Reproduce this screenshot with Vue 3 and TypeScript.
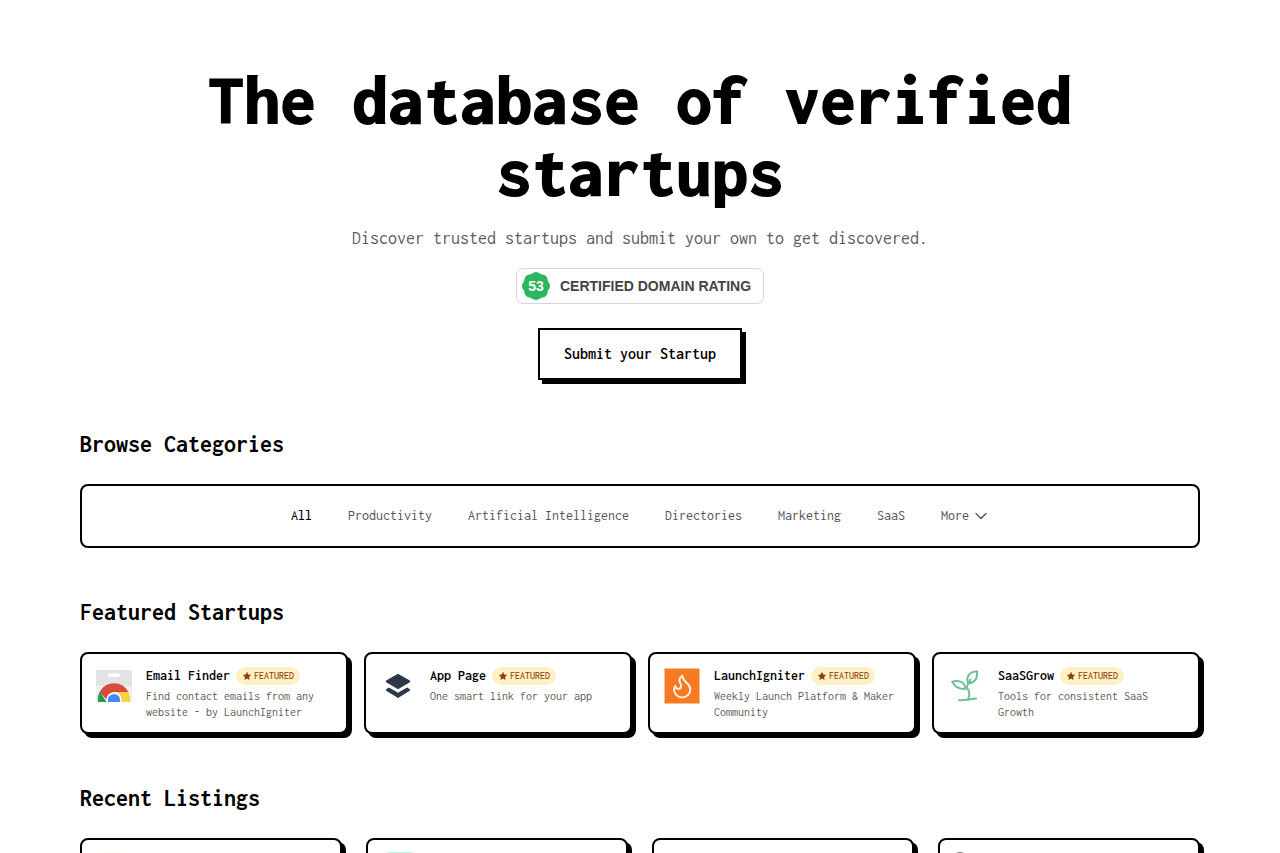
<script setup lang="ts">
type Icon = 'store' | 'layers' | 'flame' | 'sprout'

interface Startup {
  name: string
  description: string
  icon: Icon
}

const categories: string[] = [
  'All',
  'Productivity',
  'Artificial Intelligence',
  'Directories',
  'Marketing',
  'SaaS',
]

const featured: Startup[] = [
  { name: 'Email Finder', description: 'Find contact emails from any website - by LaunchIgniter', icon: 'store' },
  { name: 'App Page', description: 'One smart link for your app', icon: 'layers' },
  { name: 'LaunchIgniter', description: 'Weekly Launch Platform & Maker Community', icon: 'flame' },
  { name: 'SaaSGrow', description: 'Tools for consistent SaaS Growth', icon: 'sprout' },
]

const recent: string[] = ['sun', 'mint', 'plain', 'ring']
</script>

<template>
  <main class="page">
    <header class="hero">
      <h1>The database of verified startups</h1>
      <p class="lead">Discover trusted startups and submit your own to get discovered.</p>
      <a class="rating" href="#rating">
        <svg class="seal" viewBox="0 0 28 28" aria-hidden="true">
          <g fill="#2db662">
            <circle cx="14" cy="14" r="12.4" />
            <circle cx="14" cy="6" r="6" />
            <circle cx="19.7" cy="8.3" r="6" />
            <circle cx="22" cy="14" r="6" />
            <circle cx="19.7" cy="19.7" r="6" />
            <circle cx="14" cy="22" r="6" />
            <circle cx="8.3" cy="19.7" r="6" />
            <circle cx="6" cy="14" r="6" />
            <circle cx="8.3" cy="8.3" r="6" />
          </g>
          <text x="14" y="19" text-anchor="middle" fill="#fff">53</text>
        </svg>
        <span>CERTIFIED DOMAIN RATING</span>
      </a>
      <button class="submit" type="button">Submit your Startup</button>
    </header>

    <section>
      <h2>Browse Categories</h2>
      <nav class="categories" aria-label="Categories">
        <a
          v-for="(category, i) in categories"
          :key="category"
          href="#categories"
          :class="{ active: i === 0 }"
        >{{ category }}</a>
        <button type="button" class="more">
          More
          <svg viewBox="0 0 16 16" aria-hidden="true">
            <path d="M3 5.5 8 10.5 13 5.5" fill="none" stroke="currentColor" stroke-width="1.4" stroke-linecap="round" stroke-linejoin="round" />
          </svg>
        </button>
      </nav>
    </section>

    <section>
      <h2>Featured Startups</h2>
      <div class="grid">
        <a v-for="item in featured" :key="item.name" class="card" href="#startup">
          <svg v-if="item.icon === 'store'" class="icon" viewBox="0 0 40 40" aria-hidden="true">
            <path d="M2 4h36v16H2z" fill="#e3e3e3" />
            <path d="M2 20h36v16H2z" fill="#efefef" />
            <rect x="14" y="7.5" width="12" height="3.4" rx="1.7" fill="#fff" />
            <path d="M5.6 26A16.2 16.2 0 0 1 34.4 26H20L12 33z" fill="#db4a3f" />
            <path d="M4 36A16.2 16.2 0 0 1 5.8 25.8L12.5 36z" fill="#239a56" />
            <path d="M20 26h14.4A16.2 16.2 0 0 1 36 36H20z" fill="#fdd043" />
            <path d="M12.7 36A7.6 7.6 0 1 1 27.3 36z" fill="#fff" />
            <path d="M14.1 36A6.2 6.2 0 1 1 25.9 36z" fill="#4587f3" />
          </svg>
          <svg v-else-if="item.icon === 'layers'" class="icon" viewBox="0 0 40 40" aria-hidden="true">
            <path d="M20 7.8 31.8 14.6Q32.6 15.4 31.8 16.2L20 23.2 8.2 16.2Q7.4 15.4 8.2 14.6z" fill="#2c3848" />
            <path d="M11 21.6 20 26.8 29 21.6 31.8 23.2Q32.6 24 31.8 24.8L20 32 8.2 24.8Q7.4 24 8.2 23.2z" fill="#2c3848" />
          </svg>
          <svg v-else-if="item.icon === 'flame'" class="icon" viewBox="0 0 40 40" aria-hidden="true">
            <path d="M2.5 2.5h35v35h-35z" fill="#f67a24" />
            <path d="M16.2 22.8A2.9 2.9 0 0 0 19.1 19.9C19.1 18.3 18.5 17.6 17.9 16.4 16.7 13.9 17.7 11.8 20.2 9.6 20.8 12.5 22.5 15.3 24.8 17.1 27.1 19 28.3 21.1 28.3 23.4A8.1 8.1 0 0 1 12.1 23.4C12.1 22 12.6 20.7 13.3 19.9A2.9 2.9 0 0 0 16.2 22.8z" fill="none" stroke="#fff1e2" stroke-width="2" stroke-linejoin="round" />
          </svg>
          <svg v-else class="icon" viewBox="0 0 40 40" aria-hidden="true">
            <g fill="none" stroke="#6ec09a" stroke-width="2" stroke-linecap="round" stroke-linejoin="round">
              <path d="M13 34.2C18 34.3 25 33 30 32.5" />
              <path d="M22 33.2C24.6 28 22.8 24 20.6 21.5 21 19 22 17 24.5 13.6" />
              <path d="M19.3 22.8C12.5 23.4 8.3 20.4 6.2 15.7 12.5 13.7 19 15.8 19.3 22.8z" />
              <path d="M22.2 17.6C19.4 10.6 23.8 5.6 31 5.2 31.8 12.2 29 16.8 22.2 17.6z" />
            </g>
          </svg>
          <div class="body">
            <div class="title">
              <h3>{{ item.name }}</h3>
              <span class="tag">
                <svg viewBox="0 0 10 10" aria-hidden="true">
                  <path d="M5 .8 6.3 3.5 9.2 3.9 7.1 5.9 7.6 8.9 5 7.5 2.4 8.9 2.9 5.9 .8 3.9 3.7 3.5z" fill="#8f400e" />
                </svg>
                FEATURED
              </span>
            </div>
            <p>{{ item.description }}</p>
          </div>
        </a>
      </div>
    </section>

    <section>
      <h2>Recent Listings</h2>
      <div class="grid wide">
        <a v-for="kind in recent" :key="kind" class="card" href="#listing" aria-label="Listing">
          <svg class="icon" viewBox="0 0 40 40" aria-hidden="true">
            <rect v-if="kind === 'sun'" x="6" width="24" height="40" rx="6" fill="#fffdf2" />
            <rect v-else-if="kind === 'mint'" width="40" height="40" rx="10" fill="#b4f5e3" />
            <circle v-else-if="kind === 'ring'" cx="8" cy="8" r="7" fill="none" stroke="#68707a" stroke-width="2" />
          </svg>
        </a>
      </div>
    </section>
  </main>
</template>

<style>
body {
  margin: 0;
  background: #fff;
}
</style>

<style scoped>
.page {
  box-sizing: border-box;
  max-width: 1280px;
  margin: 0 auto;
  padding: 64px 80px 0;
  color: #000;
  font-family: Inconsolata, "Noto Sans Mono CJK SC", "Liberation Mono", monospace;
}

h1,
h2,
h3,
p {
  margin: 0;
}

a {
  color: inherit;
  text-decoration: none;
}

button {
  font-family: inherit;
  cursor: pointer;
}

.hero {
  display: flex;
  flex-direction: column;
  align-items: center;
  text-align: center;
}

h1 {
  max-width: 896px;
  font-size: 72px;
  line-height: 72px;
  font-weight: 900;
}

.lead {
  margin-top: 16px;
  font-size: 18px;
  line-height: 28px;
  color: #5c5c5c;
}

.rating {
  display: flex;
  align-items: center;
  gap: 10px;
  box-sizing: border-box;
  height: 36px;
  margin-top: 16px;
  padding: 0 12px 0 5px;
  border: 1px solid #d6d6d6;
  border-radius: 7px;
  color: #444;
  font: 700 14px/20px "Liberation Sans", Arial, sans-serif;
}

.seal {
  width: 28px;
  height: 28px;
}

.submit {
  margin-top: 24px;
  padding: 12px 24px;
  border: 2px solid #000;
  background: #fff;
  box-shadow: 4px 4px 0 #000;
  color: #000;
  font-size: 16px;
  line-height: 24px;
  font-weight: 600;
}

section {
  margin-top: 48px;
}

h2 {
  margin-bottom: 24px;
  font-size: 24px;
  line-height: 32px;
  font-weight: 700;
}

.categories {
  display: flex;
  flex-wrap: wrap;
  justify-content: center;
  align-items: center;
  gap: 12px 36px;
  padding: 20px;
  border: 2px solid #000;
  border-radius: 8px;
  font-size: 14px;
  line-height: 20px;
  color: #555;
}

.categories .active {
  color: #000;
  font-weight: 500;
}

.more {
  display: flex;
  align-items: center;
  gap: 4px;
  padding: 0;
  border: 0;
  background: none;
  color: inherit;
  font-size: 14px;
  line-height: 20px;
}

.more svg {
  width: 16px;
  height: 16px;
}

.grid {
  display: grid;
  grid-template-columns: repeat(4, minmax(0, 1fr));
  gap: 16px;
}

.grid.wide {
  gap: 24px;
}

.card {
  display: flex;
  gap: 12px;
  padding: 12px;
  border: 2px solid #000;
  border-radius: 8px;
  background: #fff;
  box-shadow: 4px 4px 0 #000;
}

.icon {
  flex: none;
  width: 40px;
  height: 40px;
}

.body {
  min-width: 0;
}

.title {
  display: flex;
  align-items: center;
  gap: 6px;
  margin-bottom: 2px;
}

h3 {
  font-size: 14px;
  line-height: 20px;
  font-weight: 600;
}

.tag {
  display: flex;
  align-items: center;
  gap: 2px;
  padding: 0 6px;
  border-radius: 9px;
  background: #fef1c4;
  color: #8f400e;
  font-size: 10px;
  line-height: 18px;
  font-weight: 500;
}

.tag svg {
  width: 10px;
  height: 10px;
}

.body p {
  font-size: 12px;
  line-height: 16px;
  color: #5c5c5c;
}
</style>
